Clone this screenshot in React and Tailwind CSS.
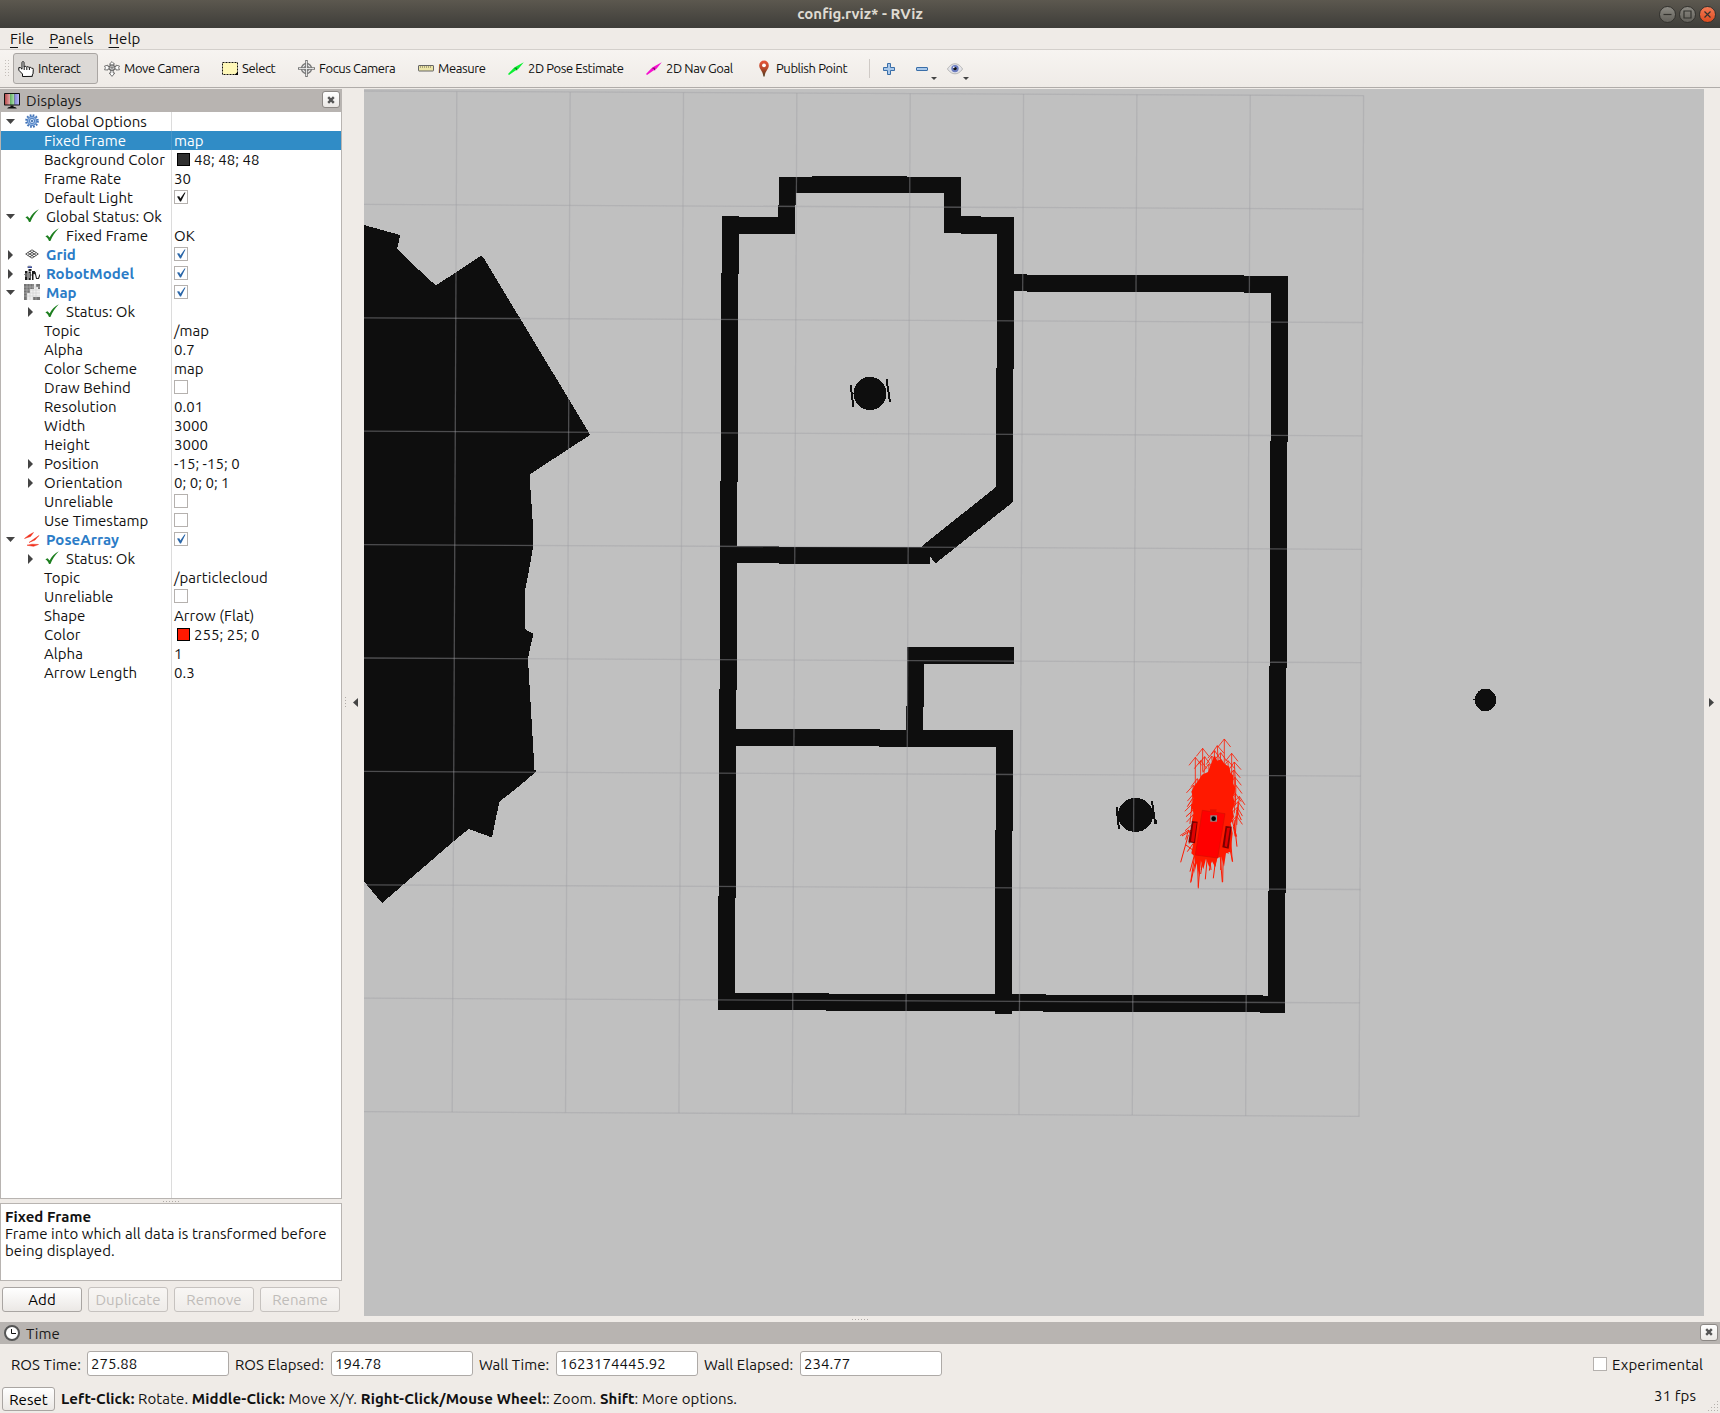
import React from "react";

const DARK = "#0e0e0e";

/* ---------- icons ---------- */

const HandIcon = () => (
  <svg width="16" height="16" viewBox="0 0 16 16">
    <path d="M4.500 15.500V13L.8 9.200V6.600h1.600L4 8.200V1.500C4 .3 6 .3 6 1.500V6l.6-.7h1.200l.7.9.8-.5h1l.6.9.8-.3h1l.8.9 1.600.2.2 1.300-.3 4.200-.7 1v1.500z" fill="#fff" stroke="#111" />
    <path d="M6.200 6v3M8.800 6.300V9M11.400 6.800V9" stroke="#111" fill="none" />
  </svg>
);
const MoveIcon = () => (
  <svg width="16" height="16" viewBox="0 0 16 16" fill="none" stroke="#666" strokeWidth="0.9">
    <path fill="#fff" d="M8 .6l2.600 2.600H9.200V5.200L12 5.600V4.200L15.500 5 14.600 6.800 15.500 8.800 12 9V7.800L9.200 8.500V12h1.600L8 15.400 5.200 12h1.600V8.500L4 7.800V9L.5 8.800 1.400 6.800.5 5 4 4.200v1.400l2.800-.4V3.200H5.400z" />
    <circle cx="8" cy="6.800" r="3" /><path d="M5 6.800h6M8 3.800v6" />
  </svg>
);
const SelectIcon = () => (
  <svg width="16" height="14" viewBox="0 0 16 14">
    <rect x="0.500" y="0.500" width="15" height="12" fill="#fff8b8" stroke="#111" strokeDasharray="2 1" />
    <path d="M16 9.500V13h-3.500z" fill="#000" />
  </svg>
);
const FocusIcon = () => (
  <svg width="17" height="17" viewBox="0 0 17 17" fill="none" stroke="#777">
    <circle cx="8.500" cy="8.500" r="5" fill="#e4e4e4" strokeWidth="1.300" />
    <circle cx="8.500" cy="8.500" r="2.600" />
    <path d="M8.500 0v17M0 8.500h17" strokeWidth="2.600" /><path d="M8.500 1v15M1 8.500h15" stroke="#eee" strokeWidth="0.900" />
  </svg>
);
const RulerIcon = () => (
  <svg width="16" height="7" viewBox="0 0 16 7">
    <rect x="0.500" y="0.500" width="15" height="5.500" rx="0.500" fill="#ece5a8" stroke="#666" />
    <path d="M2.500 1v2M4.500 1v2M6.500 1v2M8.500 1v2M10.500 1v2M12.500 1v2" stroke="#999270" strokeWidth="0.800" />
  </svg>
);
const PoseIcon = ({ color, dark }) => (
  <svg width="16" height="14" viewBox="0 0 16 14">
    <path d="M0 12L5.500 6.200 8 4.500 15.800.2 10.500 6.800 7.500 8.600 1 13z" fill={color} />
    <path d="M6.500 6.200l2 .2.200 1.800" stroke={dark} strokeWidth="1.200" fill="none" />
  </svg>
);
const PinIcon = () => (
  <svg width="16" height="17" viewBox="0 0 16 17">
    <defs><linearGradient id="pin" x2="0" y2="1"><stop stopColor="#e8553a" /><stop offset=".5" stopColor="#b9492c" /><stop offset="1" stopColor="#4a3a1c" /></linearGradient></defs>
    <path d="M8 .6a4.800 4.800 0 0 1 4.800 4.800C12.800 9 9.200 10.500 8.600 16.400H7.400C6.800 10.500 3.200 9 3.200 5.400A4.800 4.800 0 0 1 8 .6z" fill="url(#pin)" />
    <circle cx="8" cy="5.300" r="1.900" fill="#fff" />
  </svg>
);
const PlusIcon = () => (
  <svg width="12" height="12" viewBox="0 0 12 12"><path d="M4.500.5h3v4h4v3h-4v4h-3v-4h-4v-3h4z" fill="#a9c8ea" stroke="#3a6ea8" /></svg>
);
const MinusIcon = () => (
  <svg width="12" height="4" viewBox="0 0 12 4"><rect x=".5" y=".5" width="11" height="3" rx=".4" fill="#a9c8ea" stroke="#3a6ea8" /></svg>
);
const EyeIcon = () => (
  <svg width="16" height="12" viewBox="0 0 16 12">
    <path d="M.4 6C3 2 5.500.8 8 .8S13 2 15.600 6C13 9.600 10.500 10.800 8 10.800S3 9.600.4 6z" fill="#e4e4e8" stroke="#aaa" strokeWidth=".8" />
    <circle cx="8" cy="5.600" r="3.700" fill="#6b7cc0" /><circle cx="8" cy="5.600" r="1.700" fill="#111" />
    <circle cx="6.800" cy="4.400" r=".8" fill="#fff" />
  </svg>
);
const Caret = () => <svg width="6" height="3" viewBox="0 0 6 3"><path d="M0 0h6L3 3z" fill="#444" /></svg>;
const MonitorIcon = () => (
  <svg width="16" height="16" viewBox="0 0 16 16">
    <defs>
      <linearGradient id="mr"><stop stopColor="#b64a4a" /><stop offset="1" stopColor="#e3a9a9" /></linearGradient>
      <linearGradient id="mg"><stop stopColor="#5fae5f" /><stop offset="1" stopColor="#b4e3b4" /></linearGradient>
      <linearGradient id="mb"><stop stopColor="#8080d8" /><stop offset="1" stopColor="#b9b9f2" /></linearGradient>
    </defs>
    <rect width="16" height="12.500" rx=".8" fill="#111" />
    <rect x="1" y="1" width="5" height="10.500" fill="url(#mr)" /><rect x="6" y="1" width="4.500" height="10.500" fill="url(#mg)" /><rect x="10.500" y="1" width="4.500" height="10.500" fill="url(#mb)" />
    <path d="M6.500 12.500h3v1.300c1.500.2 2.800.6 3.300 1.700H3.200c.5-1.100 1.800-1.500 3.300-1.700z" fill="#111" />
  </svg>
);
const ClockIcon = () => (
  <svg width="16" height="16" viewBox="0 0 16 16"><circle cx="8" cy="8" r="7" fill="#fff" stroke="#555" strokeWidth="2" /><path d="M7.500 4v4.500H12" fill="none" stroke="#111" /></svg>
);
const GearIcon = () => (
  <svg width="14" height="14" viewBox="0 0 14 14">
    <circle cx="7" cy="7" r="5.800" fill="none" stroke="#3f72b8" strokeWidth="2" strokeDasharray="1.700 1.337" />
    <circle cx="7" cy="7" r="4.700" fill="#8db2e3" stroke="#3f72b8" strokeWidth=".8" />
    <circle cx="7" cy="7" r="2.600" fill="#c6daf3" stroke="#3f72b8" strokeWidth=".8" /><circle cx="7" cy="7" r="1" fill="#2f5f9f" />
  </svg>
);
const CheckIcon = () => (
  <svg width="14" height="14" viewBox="0 0 14 14"><path d="M.4 8.200L2.600 7.200 4.600 9.400C6.800 5.400 9.800 2 13.800.2 10 4 7.400 8.200 5.400 13H4C3.200 10.800 2.200 9.400.4 8.200z" fill="#1d7f1f" /></svg>
);
const GridIcon = () => (
  <svg width="14" height="10" viewBox="0 0 14 10" fill="none" stroke="#444" strokeWidth=".9"><path d="M7 .8L13.300 5 7 9.200.7 5zM4.900 2.200l6.300 4.200M2.800 3.600l6.300 4.200M9.100 2.200L2.800 6.400M11.200 3.600L4.900 7.800" /></svg>
);
const RobotIcon = () => (
  <svg width="16" height="16" viewBox="0 0 16 16">
    <path d="M3 1.500C4 0 7 0 8 1.500V3H3z" fill="#b7b7b7" /><rect x="4" y="1.500" width="4" height="1.500" fill="#3b4fa0" />
    <path d="M4.500 4h3v2h-3zM1 6h2.500v9H1zM4.500 6.500h2.300V15H4.500zM8 6h3l.3 3H9.500v6H8z" fill="#1a1a1a" />
    <path d="M11 7l1.500 6.500h2L16 9.500M.5 9.500h2M5.500 10h2M9 8l1.500 1" stroke="#222" strokeWidth="1.100" fill="none" /><path d="M2 8v4M5.700 8v5" stroke="#ddd" strokeWidth=".7" />
  </svg>
);
const MapIcon = () => (
  <svg width="16" height="16" viewBox="0 0 16 16">
    <rect width="16" height="16" fill="#efefef" />
    <path d="M0 0h10v5H6v4H3v7H0zM12 0h4v5h-2V3h-2zM9 13h7v3H9z" fill="#747474" />
    <path d="M3 0v16M6 0v16M9 0v16M12 0v16M0 3h16M0 6h16M0 9h16M0 12h16" stroke="#c4c4c4" strokeWidth=".5" />
  </svg>
);
const PosesIcon = () => (
  <svg width="16" height="15" viewBox="0 0 16 15" stroke="#f0301c" fill="#f0301c">
    <path d="M.5 6.500L5 3 9.500.5 6.500 4.500zM5 10.500L10 7 15 3.500 11 8zM3 13.200l5-1 6.500.300-5 1.800z" strokeWidth=".5" />
  </svg>
);

const Tri = ({ open }) =>
  open ? (
    <svg width="9" height="5" viewBox="0 0 9 5"><path d="M0 0h9L4.500 5z" fill="#444" /></svg>
  ) : (
    <svg width="5" height="10" viewBox="0 0 5 10"><path d="M0 0v10L5 5z" fill="#444" /></svg>
  );

/* ---------- shared pieces ---------- */

const Box = ({ on, color }) => (
  <span className="mb-px flex h-[14px] w-[14px] items-center justify-center border border-[#b5b1ae] bg-white">
    {on && (
      <svg width="10" height="10" viewBox="0 0 10 10"><path d="M1 4.500l2.300-.3 1 2.300L8.500.5h1L5 9.500H4z" fill={color} /></svg>
    )}
  </span>
);

const CloseButton = () => (
  <span className="mb-[2px] flex h-[17px] w-[18px] items-center justify-center rounded-[3px] border border-[#8c8885] bg-gradient-to-b from-white to-[#ebe8e5]">
    <svg width="8" height="8" viewBox="0 0 8 8"><path d="M1.200 1.200l5.600 5.600M6.800 1.200L1.200 6.800" stroke="#555" strokeWidth="2.400" /></svg>
  </span>
);

const DockTitle = ({ icon, title, className }) => (
  <div className={"flex shrink-0 items-center bg-[#b8b4b1] pl-1 pr-[2px] " + className}>
    {icon}
    <span className="ml-[6px] flex-1 text-[#1a1a1a]">{title}</span>
    <CloseButton />
  </div>
);

/* ---------- toolbar ---------- */

const tools = [
  { label: "Interact", icon: <HandIcon />, w: "w-[86px]", active: true },
  { label: "Move Camera", icon: <MoveIcon />, w: "w-[118px]" },
  { label: "Select", icon: <SelectIcon />, w: "w-[77px]" },
  { label: "Focus Camera", icon: <FocusIcon />, w: "w-[119px]" },
  { label: "Measure", icon: <RulerIcon />, w: "w-[90px]" },
  { label: "2D Pose Estimate", icon: <PoseIcon color="#0bf032" dark="#0a8a20" />, w: "w-[138px]" },
  { label: "2D Nav Goal", icon: <PoseIcon color="#f511cf" dark="#8a0a70" />, w: "w-[110px]" },
  { label: "Publish Point", icon: <PinIcon />, w: "w-[118px]" },
];

const Toolbar = () => (
  <div className="flex h-[38px] shrink-0 items-center border-b border-[#b0aca9] bg-gradient-to-b from-[#f7f4f1] to-[#efebe7] pl-[5px]">
    <svg width="5" height="18" viewBox="0 0 5 18" className="mr-[3px]"><path d="M.5 0v18M3.500 0v18" stroke="#c4bfba" strokeDasharray="1 2" /></svg>
    {tools.map((t) => (
      <div key={t.label} className={"flex h-[31px] shrink-0 items-center " + t.w}>
        <div className={"flex h-full items-center whitespace-nowrap border " + (t.active ? "w-[85px] rounded-[3px] border-[#aaa6a3] bg-[#dcd9d6]" : "w-full border-transparent")}>
          <span className="ml-[3px] flex w-[17px] justify-center">{t.icon}</span>
          <span className="ml-1 text-[13px] tracking-[-0.4px]">{t.label}</span>
        </div>
      </div>
    ))}
    <span className="h-[19px] w-px bg-[#cfcac6]" />
    <span className="ml-[13px]"><PlusIcon /></span>
    <span className="ml-[21px]"><MinusIcon /></span>
    <span className="ml-[3px] mt-5"><Caret /></span>
    <span className="ml-[10px]"><EyeIcon /></span>
    <span className="mt-5"><Caret /></span>
  </div>
);

/* ---------- display tree ---------- */

const rows = [
  { l: 0, t: "Global Options", a: "o", icon: <GearIcon /> },
  { l: 1, t: "Fixed Frame", v: "map", sel: true },
  { l: 1, t: "Background Color", v: "48; 48; 48", sw: "bg-[#303030]" },
  { l: 1, t: "Frame Rate", v: "30" },
  { l: 1, t: "Default Light", c: "on", cc: "#111" },
  { l: 0, t: "Global Status: Ok", a: "o", icon: <CheckIcon /> },
  { l: 1, t: "Fixed Frame", v: "OK", icon: <CheckIcon /> },
  { l: 0, t: "Grid", a: "c", b: true, c: "on", icon: <GridIcon /> },
  { l: 0, t: "RobotModel", a: "c", b: true, c: "on", icon: <RobotIcon /> },
  { l: 0, t: "Map", a: "o", b: true, c: "on", icon: <MapIcon /> },
  { l: 1, t: "Status: Ok", a: "c", icon: <CheckIcon /> },
  { l: 1, t: "Topic", v: "/map" },
  { l: 1, t: "Alpha", v: "0.7" },
  { l: 1, t: "Color Scheme", v: "map" },
  { l: 1, t: "Draw Behind", c: "off" },
  { l: 1, t: "Resolution", v: "0.01" },
  { l: 1, t: "Width", v: "3000" },
  { l: 1, t: "Height", v: "3000" },
  { l: 1, t: "Position", v: "-15; -15; 0", a: "c" },
  { l: 1, t: "Orientation", v: "0; 0; 0; 1", a: "c" },
  { l: 1, t: "Unreliable", c: "off" },
  { l: 1, t: "Use Timestamp", c: "off" },
  { l: 0, t: "PoseArray", a: "o", b: true, c: "on", icon: <PosesIcon /> },
  { l: 1, t: "Status: Ok", a: "c", icon: <CheckIcon /> },
  { l: 1, t: "Topic", v: "/particlecloud" },
  { l: 1, t: "Unreliable", c: "off" },
  { l: 1, t: "Shape", v: "Arrow (Flat)" },
  { l: 1, t: "Color", v: "255; 25; 0", sw: "bg-[#ff1900]" },
  { l: 1, t: "Alpha", v: "1" },
  { l: 1, t: "Arrow Length", v: "0.3" },
];

const Row = ({ r }) => (
  <div className={"flex h-[19px] items-center whitespace-nowrap " + (r.sel ? "bg-[#308cc6] text-white" : "text-[#111]")}>
    <div className={"flex h-full w-[170px] items-center tracking-[0.04px] " + (r.l ? "pl-5" : "")}>
      <span className="flex w-[19px] justify-center">{r.a && <Tri open={r.a === "o"} />}</span>
      {r.icon && <span className="mb-px ml-1 flex w-4 justify-center">{r.icon}</span>}
      <span className={(r.icon ? "ml-[6px] " : "ml-[4px] ") + (r.b ? "font-bold text-[#2b7cc7]" : "")}>{r.t}</span>
    </div>
    <div className={"flex h-full flex-1 items-center border-l pl-[2px] tracking-[0.04px] " + (r.sel ? "border-[#4594c8]" : "border-[#dcdcdc]")}>
      {r.c && <Box on={r.c === "on"} color={r.cc || "#2a66a8"} />}
      {r.sw && <span className={"ml-[3px] mr-1 h-[13px] w-[13px] border border-black " + r.sw} />}
      {r.v && <span>{r.v}</span>}
    </div>
  </div>
);

const PushButton = ({ label, off, className }) => (
  <div className={"flex items-center justify-center rounded-[3px] border bg-gradient-to-b " + className + (off ? " border-[#c6c2bf] from-[#f8f6f4] to-[#efece9] text-[#bfbcb9]" : " border-[#a9a5a2] from-white to-[#ebe8e5] text-black")}>
    {label}
  </div>
);

const Dots = () => (
  <svg width="17" height="1" viewBox="0 0 17 1"><path d="M0 .5h17" stroke="#b0aba7" strokeDasharray="1 2" /></svg>
);

const Displays = () => (
  <div className="flex w-[342px] shrink-0 flex-col">
    <DockTitle icon={<MonitorIcon />} title="Displays" className="h-[23px]" />
    <div className="flex h-[1087px] flex-col border-x border-b border-[#b8b4b1] bg-white">
      {rows.map((r, i) => <Row key={i} r={r} />)}
      <div className="ml-[170px] flex-1 border-l border-[#dcdcdc]" />
    </div>
    <div className="flex h-[4px] items-center justify-center"><Dots /></div>
    <div className="h-[78px] whitespace-nowrap border border-[#b8b4b1] bg-white pl-1 pt-1 leading-[17px] tracking-[0.07px]">
      <div className="font-bold">Fixed Frame</div>
      <div>Frame into which all data is transformed before<br />being displayed.</div>
    </div>
    <div className="mt-[6px] flex gap-[6px] px-[2px]">
      <PushButton label="Add" className="h-[25px] w-20" />
      <PushButton label="Duplicate" off className="h-[25px] w-20" />
      <PushButton label="Remove" off className="h-[25px] w-20" />
      <PushButton label="Rename" off className="h-[25px] w-20" />
    </div>
  </div>
);

/* ---------- 3D view ---------- */

// x1, y1, x2, y2 of every wall segment
const walls = [
  [779, 177, 961, 193], [812, 176, 907, 193], [779, 177, 796, 205], [778, 205, 795, 234],
  [722, 216, 736, 234], [722, 217, 795, 234], [722, 216, 739, 274], [721, 273, 738, 482],
  [720, 481, 737, 690], [944, 177, 961, 233], [944, 216, 981, 233], [961, 217, 1014, 234],
  [997, 217, 1014, 369], [996, 368, 1013, 501], [1014, 274, 1027, 291], [1027, 275, 1244, 292],
  [1244, 276, 1288, 293], [1271, 276, 1288, 442], [1270, 441, 1287, 668], [1269, 666, 1286, 893],
  [1268, 891, 1285, 1013], [720, 546, 779, 563], [779, 547, 930, 564], [907, 647, 1014, 664],
  [907, 647, 924, 707], [906, 706, 923, 735], [736, 729, 880, 746], [879, 730, 1013, 747],
  [996, 730, 1013, 831], [995, 830, 1012, 1014], [719, 689, 736, 898], [718, 896, 735, 1010],
  [718, 993, 829, 1010], [826, 994, 1046, 1011], [1043, 995, 1263, 1012], [1260, 996, 1285, 1013],
];

const gridV = Array.from({ length: 9 }, (_, i) => 456.800 + i * 113.350);
const gridH = Array.from({ length: 10 }, (_, i) => 91 + i * 113.400);

// particle arrows: tip x, tip y, tail length, heading in degrees
const particles = [
  [433, 57, 80, 0], [368, 85, 70, 0], [346, 112, 100, 0], [412, 77, 60, -3], [455, 100, 80, 0],
  [374, 110, 60, 2], [404, 92, 70, 4], [463, 126, 70, -3], [362, 122, 60, 0],
  [386, 132, 60, -3], [395, 108, 60, -6], [422, 98, 60, 2], [461, 150, 70, -2], [340, 196, 80, 4],
  [465, 172, 60, 0], [342, 220, 70, 2], [478, 229, 60, 5], [468, 196, 60, 2], [336, 252, 60, 6],
  [472, 262, 60, 8], [340, 284, 60, 4], [474, 245, 70, 3], [470, 288, 60, 4], [338, 312, 60, 10],
  [326, 330, 30, 18], [466, 220, 60, 3], [352, 176, 60, 0], [444, 122, 60, -2],
];
const tails = [
  [325, 345, 302, 427], [345, 400, 332, 488], [352, 405, 355, 505], [362, 410, 355, 500], [372, 400, 362, 462],
  [382, 410, 376, 478], [395, 410, 388, 452], [408, 410, 400, 475], [420, 400, 427, 487], [430, 390, 428, 486],
  [446, 370, 458, 425], [452, 360, 457, 425], [462, 300, 471, 380], [456, 300, 470, 350], [470, 270, 484, 300],
  [340, 370, 322, 395], [350, 380, 330, 455], [345, 430, 333, 485], [412, 405, 405, 440], [424, 400, 422, 450],
  [368, 420, 364, 450], [390, 420, 393, 450], [340, 270, 318, 290], [334, 330, 306, 348], [338, 235, 322, 260],
  [345, 395, 318, 375], [460, 320, 466, 350], [436, 395, 446, 400],
];

const Particles = () => (
  <g transform="translate(1080 720) scale(0.3333)">
    <g stroke="#ff1900" fill="none">
      {particles.map(([x, y, n, a], i) => (
        <path key={i} transform={`translate(${x} ${y}) rotate(${a})`} strokeWidth="2.400" d={`M0 0V${n}M-19 24L0 0L19 24`} />
      ))}
      {tails.map(([a, b, c, d], i) => (
        <path key={i} strokeWidth="3" d={`M${a} ${b}L${c} ${d}`} />
      ))}
    </g>
    <path fill="#ff1900" d="M404 106L412 122 424 117 434 132 448 140 452 160 460 166 459 190 466 205 460 230 464 250 458 270 462 290 452 310 458 340 452 395 438 400 432 440 424 410 412 414 405 440 396 424 388 442 378 416 370 448 362 420 358 470 350 430 343 460 345 410 334 400 340 370 345 330 335 305 342 280 334 262 340 235 334 215 344 196 354 184 366 164 384 156 392 134z" />
    <path fill="#f00" stroke="#d80e00" strokeWidth="2" d="M367 271L435 281 413 414 346 405z" />
    <path fill="#e81000" d="M390 268h20l-2 12h-18z" />
    <path fill="#7a0000" d="M336 303L353 305 345 370 325 367z" />
    <path fill="#e00000" d="M340 309L350 308 342 366 333 364z" />
    <path fill="#7a0000" d="M437 318L455 320 446 386 427 382z" />
    <path fill="#e00000" d="M441 324L450 323 441 381 434 379z" />
    <path fill="#8d8d8d" d="M391 286h20v19h-20z" /><circle cx="401" cy="296" r="7" fill="#000" />
  </g>
);

const MapView = () => (
  <svg width="1340" height="1227" viewBox="364 89 1340 1227" className="block shrink-0 bg-[#c0c0c0]">
    <g fill={DARK} shapeRendering="crispEdges">
      <path d="M364 225L400 235 399 241 397 248.700 402 253.700 419 270 435.700 285.400 456.700 272 480.700 256 483 257 589.500 433.500 590 435 570 448 529.500 474.600 532.700 521.500 533.500 544.500 528.700 572 524.500 593 525.500 629.400 533.500 634 530.700 645.500 528 659 534.500 769.500 536.700 771 520 785.500 499.500 801.600 495.500 820 492 837.500 468.700 829 454 841 382 903 364 881.500z" />
      {walls.map(([a, b, c, d], i) => <rect key={i} x={a} y={b} width={c - a} height={d - b} />)}
      <path d="M996 487L1013 499V502L936 563 934 562 930.500 557 922 546z" />
      <ellipse cx="870" cy="393.500" rx="16.500" ry="16.700" />
      <ellipse cx="1135.500" cy="815" rx="17.500" ry="17" />
      <ellipse cx="1485.500" cy="700" rx="10.700" ry="11.300" />
      <rect x="1473" y="699" width="3" height="1" />
      <rect x="1154" y="820" width="3" height="4" />
      <path d="M850.500 385L853.500 407M886.500 379L890 402M1116.500 807L1119 829M1152 801L1155 822" stroke={DARK} strokeWidth="2" />
    </g>
    <g stroke="#a0a0a4" strokeOpacity="0.440" strokeWidth="1.300">
      {gridV.map((x, i) => <path key={i} d={`M${x} ${91.400 + i * 0.520}L${x - 4.600} ${1112 + i * 0.520}`} />)}
      {gridH.map((y, i) => <path key={i} d={`M364 ${y}L${1363.600 - i * 0.450} ${y + 4.700}`} />)}
    </g>
    <Particles />
  </svg>
);

/* ---------- time panel ---------- */

const Field = ({ label, value, w }) => (
  <>
    <span className={"shrink-0 whitespace-nowrap pt-px tracking-[0.04px] " + w}>{label}</span>
    <span className="flex h-[25px] w-[142px] shrink-0 items-center rounded-[3px] border border-[#aeaaa7] bg-white pb-px pl-[3px] tracking-[0.04px]">{value}</span>
  </>
);

const TitleButton = ({ children, close }) => (
  <span className={"flex h-[17px] w-[17px] items-center justify-center rounded-full border border-[#33322e] bg-gradient-to-b " + (close ? "from-[#f47a54] to-[#dc4a1c]" : "from-[#8c8a83] to-[#62605a]")}>
    <svg width="9" height="9" viewBox="0 0 9 9" fill="none" stroke="#33322e" strokeWidth="1.200">{children}</svg>
  </span>
);

export default function App() {
  return (
    <div className="flex h-[1413px] w-[1720px] flex-col overflow-hidden bg-[#efebe7] font-['Ubuntu','Noto_Sans',sans-serif] text-[15px] leading-[19px] tracking-[0.09px] text-[#111]">
      <div className="grid h-7 shrink-0 grid-cols-[1fr_auto_1fr] items-center bg-gradient-to-b from-[#5c584f] to-[#3e3d39] pl-1 pr-1">
        <span />
        <span className="pb-[2px] font-bold tracking-[0px] text-[#dfdbd2]">config.rviz* - RViz</span>
        <span className="flex justify-end gap-[3px]">
          <TitleButton><path d="M.5 4.500h8" /></TitleButton>
          <TitleButton><path d="M1 1h7v7H1z" /></TitleButton>
          <TitleButton close><path d="M1.500 1.500l6 6M7.500 1.500l-6 6" /></TitleButton>
        </span>
      </div>

      <div className="flex h-[22px] shrink-0 items-center gap-[15px] border-b border-[#d3cfcb] pl-[10px]">
        {["File", "Panels", "Help"].map((m) => (
          <span key={m}><span className="underline underline-offset-[3px]">{m[0]}</span>{m.slice(1)}</span>
        ))}
      </div>
      <Toolbar />

      <div className="mt-px flex h-[1227px] shrink-0">
        <Displays />
        <div className="flex w-[22px] shrink-0 items-center justify-between pl-[3px] pr-[6px]">
          <svg width="1" height="12" viewBox="0 0 1 12"><path d="M.5 0v12" stroke="#b0aba7" strokeDasharray="1 2" /></svg>
          <svg width="5" height="9" viewBox="0 0 5 9"><path d="M5 0v9L0 4.500z" fill="#444" /></svg>
        </div>
        <MapView />
        <div className="flex flex-1 items-center pl-[5px]">
          <svg width="5" height="9" viewBox="0 0 5 9"><path d="M0 0v9l5-4.500z" fill="#444" /></svg>
        </div>
      </div>

      <div className="flex h-[6px] shrink-0 items-center justify-center"><Dots /></div>
      <DockTitle icon={<ClockIcon />} title="Time" className="h-[22px]" />

      <div className="mt-[7px] flex h-[25px] shrink-0 items-center pl-[11px] pr-[17px]">
        <Field label="ROS Time:" value="275.88" w="w-[76px]" />
        <Field label="ROS Elapsed:" value="194.78" w="w-[102px] pl-[6px]" />
        <Field label="Wall Time:" value="1623174445.92" w="w-[83px] pl-[6px]" />
        <Field label="Wall Elapsed:" value="234.77" w="w-[102px] pl-[6px]" />
        <span className="flex-1" />
        <span className="mt-[2px]"><Box /></span>
        <span className="ml-[5px] pt-px">Experimental</span>
      </div>

      <div className="mt-[11px] flex flex-1 items-start pl-[2px]">
        <PushButton label="Reset" className="h-6 w-[53px]" />
        <span className="ml-[6px] mt-[2px] flex-1 whitespace-nowrap tracking-[0.105px]">
          <b>Left-Click:</b> Rotate. <b>Middle-Click:</b> Move X/Y. <b>Right-Click/Mouse Wheel:</b>: Zoom. <b>Shift</b>: More options.
        </span>
        <span className="-mt-px mr-[12px]">31 fps</span>
        <svg width="10" height="10" viewBox="0 0 10 10" className="mr-[2px] mt-[14px]" fill="#b5b0ac">
          {[[9, 0], [9, 3], [6, 3], [9, 6], [6, 6], [3, 6], [9, 9], [6, 9], [3, 9], [0, 9]].map(([x, y], i) => <rect key={i} x={x} y={y} width="1" height="1" />)}
        </svg>
      </div>
    </div>
  );
}
